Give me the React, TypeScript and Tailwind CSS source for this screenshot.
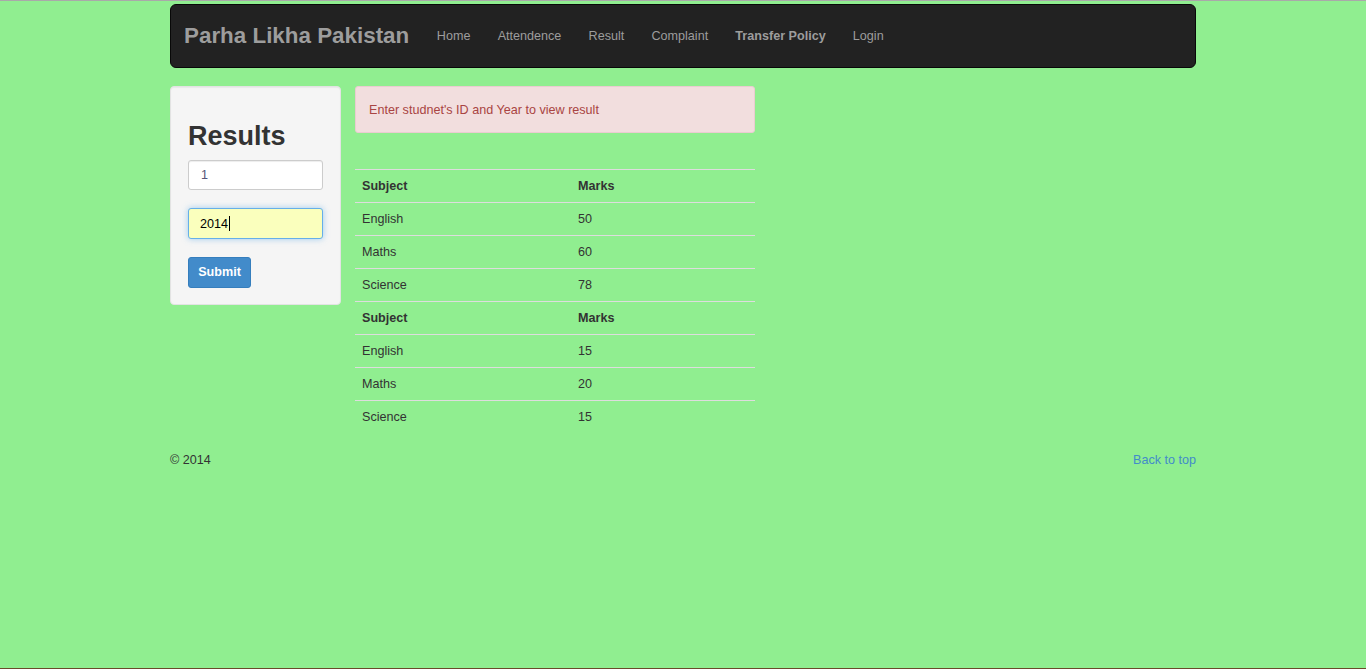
import React from "react";

const rows1 = [
  ["English", "50"],
  ["Maths", "60"],
  ["Science", "78"],
];
const rows2 = [
  ["English", "15"],
  ["Maths", "20"],
  ["Science", "15"],
];

function Row({ a, b, head }: { a: string; b: string; head?: boolean }) {
  return (
    <div className={`flex h-[33px] items-center border-t border-[#dddddd] ${head ? "font-bold" : ""}`}>
      <div className="w-[216px] pl-[7px]">{a}</div>
      <div className="flex-1 pl-[7px]">{b}</div>
    </div>
  );
}

export default function App() {
  return (
    <div
      className="h-[669px] overflow-hidden border-t border-b border-t-[#a9a9a9] border-b-[#6b4a2b] bg-[#90ee90] text-[#333333] text-[12.6px] leading-[18px]"
      style={{ fontFamily: '"Liberation Sans", Arial, Helvetica, sans-serif' }}
    >
      <div className="mx-auto w-[1026px]">
        <nav className="mt-[3px] flex h-[64px] items-center rounded-[6px] border border-[#080808] bg-[#222222]">
          <a className="pl-[13px] pr-[14px] text-[22.4px] font-bold text-[#9d9d9d]">Parha Likha Pakistan</a>
          <ul className="flex items-center">
            <li className="px-[13.6px] text-[#9d9d9d]">Home</li>
            <li className="px-[13.6px] text-[#9d9d9d]">Attendence</li>
            <li className="px-[13.6px] text-[#9d9d9d]">Result</li>
            <li className="px-[13.6px] text-[#9d9d9d]">Complaint</li>
            <li className="px-[13.6px] font-bold text-[#9d9d9d]">Transfer Policy</li>
            <li className="px-[13.6px] text-[#9d9d9d]">Login</li>
          </ul>
        </nav>

        <div className="mt-[18px] flex items-start gap-[14px]">
          <div className="w-[171px] rounded-[4px] border border-[#e3e3e3] bg-[#f5f5f5] px-[17px] pb-[16px] pt-[17px] shadow-[inset_0_1px_1px_rgba(0,0,0,0.05)]">
            <h2 className="mb-[9px] mt-[17px] text-[27px] font-bold leading-[30px] text-[#333333]">Results</h2>
            <div className="flex h-[30px] items-center rounded-[3px] border border-[#cccccc] bg-white px-[12px] text-[#555577] shadow-[inset_0_1px_1px_rgba(0,0,0,0.075)]">
              1
            </div>
            <div className="mt-[18px] flex h-[31px] items-center rounded-[3px] border border-[#66afe9] bg-[#faffbd] px-[11px] text-black shadow-[0_0_6px_rgba(102,175,233,0.6)]">
              2014<span className="ml-[1px] inline-block h-[15px] w-[1px] bg-black" />
            </div>
            <div className="mt-[18px] flex h-[31px] w-[63px] items-center justify-center rounded-[3px] border border-[#357ebd] bg-[#428bca] pb-[2px] font-bold text-white">
              Submit
            </div>
          </div>

          <div className="w-[400px]">
            <div className="flex h-[47px] items-center rounded-[3px] border border-[#ebccd1] bg-[#f2dede] px-[13px] text-[#a94442]">
              Enter studnet's ID and Year to view result
            </div>
            <div className="mt-[36px]">
              <Row a="Subject" b="Marks" head />
              {rows1.map((r) => (
                <Row key={"a" + r[0]} a={r[0]} b={r[1]} />
              ))}
              <Row a="Subject" b="Marks" head />
              {rows2.map((r) => (
                <Row key={"b" + r[0]} a={r[0]} b={r[1]} />
              ))}
            </div>
          </div>
        </div>

        <footer className="mt-[18px] flex items-center justify-between">
          <span>© 2014</span>
          <a className="text-[#428bca]">Back to top</a>
        </footer>
      </div>
    </div>
  );
}
